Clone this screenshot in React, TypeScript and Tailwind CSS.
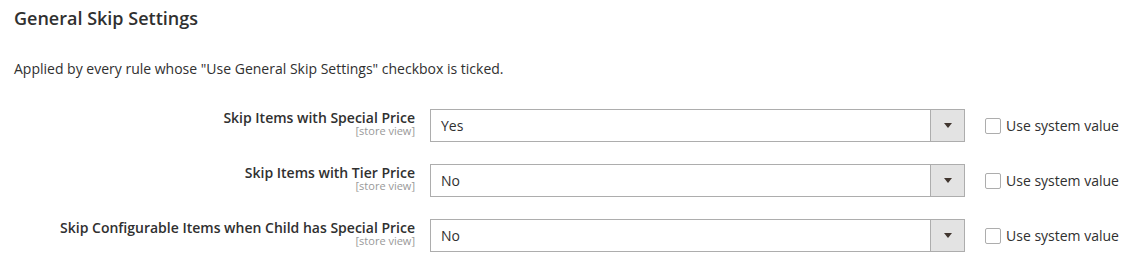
import React from "react"

const rows = [
  { label: "Skip Items with Special Price", value: "Yes" },
  { label: "Skip Items with Tier Price", value: "No" },
  { label: "Skip Configurable Items when Child has Special Price", value: "No" },
]

function SelectBox({ value }: { value: string }) {
  return (
    <div className="w-[535px] h-[33px] border border-[#adadad] bg-white flex items-center">
      <span className="flex-1 pl-[10px] text-[14px] text-[#303030]">{value}</span>
      <div className="w-[34px] h-full bg-[#e3e3e3] border-l border-[#adadad] flex items-center justify-center">
        <svg width="8" height="5" viewBox="0 0 8 5">
          <path d="M0 0 L8 0 L4 5 Z" fill="#41362f" />
        </svg>
      </div>
    </div>
  )
}

export default function App() {
  return (
    <div className="min-h-screen bg-white pl-[14px] pt-[8px] text-[#303030]" style={{ fontFamily: '"Open Sans", sans-serif' }}>
      <h2 className="text-[18px] leading-[20px] font-semibold text-[#303030]">General Skip Settings</h2>
      <p className="mt-[31px] text-[14px] leading-[20px]">
        Applied by every rule whose "Use General Skip Settings" checkbox is ticked.
      </p>

      <div className="mt-[30px] flex flex-col gap-[22px]">
        {rows.map((row) => (
          <div key={row.label} className="flex items-start">
            <div className="w-[401px] text-right pt-[2px]">
              <div className="text-[14px] leading-[14px] font-semibold">{row.label}</div>
              <div className="text-[11px] leading-[11px] text-[#999999]">[store view]</div>
            </div>
            <div className="ml-[15px]">
              <SelectBox value={row.value} />
            </div>
            <label className="ml-[20px] h-[33px] flex items-center gap-[5px] text-[14px]">
              <span className="w-[16px] h-[16px] border border-[#adadad] rounded-[2px] bg-white mt-[1px]" />
              <span>Use system value</span>
            </label>
          </div>
        ))}
      </div>
    </div>
  )
}
